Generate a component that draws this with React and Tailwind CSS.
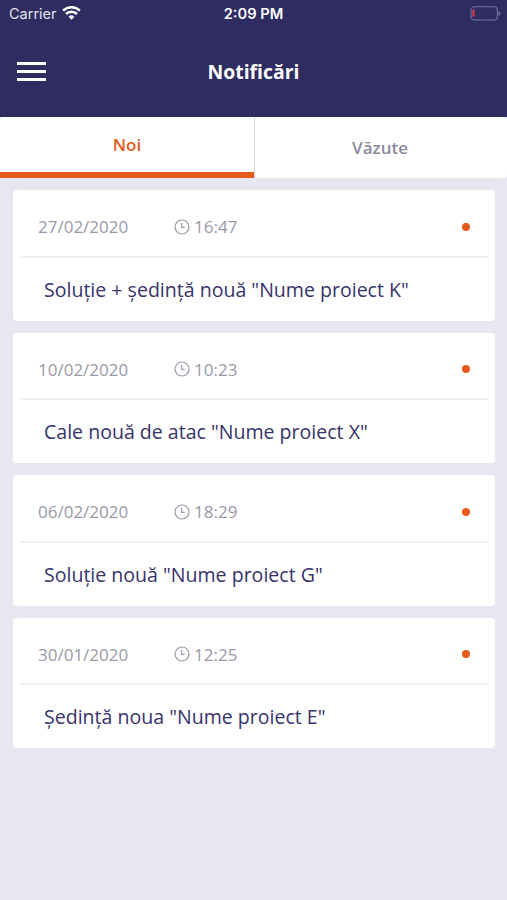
const notifications = [
  { date: "27/02/2020", time: "16:47", title: 'Soluție + ședință nouă "Nume proiect K"' },
  { date: "10/02/2020", time: "10:23", title: 'Cale nouă de atac "Nume proiect X"' },
  { date: "06/02/2020", time: "18:29", title: 'Soluție nouă "Nume proiect G"' },
  { date: "30/01/2020", time: "12:25", title: 'Ședință noua "Nume proiect E"' },
];

function WifiIcon() {
  return (
    <svg className="mb-[2px]" width="19" height="14" viewBox="0 0 19 14" fill="none" stroke="white" strokeWidth="2.5">
      <path d="M1.1 4.7a12 12 0 0 1 16.8 0" />
      <path d="M4 8a7.8 7.8 0 0 1 11 0" />
      <path d="M6.6 10.7a4.2 4.2 0 0 1 5.8 0L9.5 13.7z" fill="white" stroke="none" />
    </svg>
  );
}

function BatteryIcon() {
  return (
    <svg className="mb-[2px]" width="31" height="15" viewBox="0 0 31 15" fill="none">
      <rect x="1" y="0.8" width="26.4" height="13.2" rx="3.4" stroke="#77759f" strokeWidth="1.1" />
      <rect x="2.3" y="3.2" width="2.4" height="7.6" rx="1" fill="#c23a45" />
      <path d="M28.6 5c1.2.4 1.8 1.3 1.8 2.4s-.6 2-1.8 2.4z" fill="#77759f" />
    </svg>
  );
}

function ClockIcon() {
  return (
    <svg width="16" height="16" viewBox="0 0 16 16" fill="none" stroke="#9a99a8" strokeWidth="1.2">
      <circle cx="8" cy="8" r="7" />
      <path d="M7.7 4v4.3h3" />
    </svg>
  );
}

function StatusBar() {
  return (
    <div className="grid h-7 grid-cols-3 items-center pl-[9px] pr-[6px] font-['Inter','Liberation_Sans',sans-serif] leading-none">
      <div className="flex items-center gap-[5px]">
        <span className="text-[14.5px] text-[#e4e3f0]">Carrier</span>
        <WifiIcon />
      </div>
      <span className="-ml-[3px] text-center text-[14.7px] font-semibold">2:09 PM</span>
      <div className="flex justify-end">
        <BatteryIcon />
      </div>
    </div>
  );
}

function NotificationCard({ date, time, title }) {
  return (
    <article className="h-[130.5px] rounded-[4px] bg-white px-[7px]">
      <div className="flex h-[67.5px] items-center border-b-2 border-[#f0f0f3] pl-[18px] pr-[18px] pt-[8px] text-[17px] text-[#9a99a8]">
        <span className="w-[136px]">{date}</span>
        <ClockIcon />
        <span className="ml-1">{time}</span>
        <span className="ml-auto size-2 rounded-full bg-[#e65a1c]" />
      </div>
      <h2 className="flex h-[63.5px] items-center whitespace-nowrap pl-6 text-[19.56px] text-[#37336b]">{title}</h2>
    </article>
  );
}

export default function App() {
  return (
    <div className="min-h-[900px] w-full bg-[#e7e7f1] font-['Open_Sans',sans-serif]">
      <header className="h-[116.5px] bg-[#2e2c60] text-white">
        <StatusBar />
        <div className="grid h-[87px] grid-cols-3 items-center px-[17px]">
          <button className="flex w-[29px] flex-col gap-[5px]" aria-label="Meniu">
            <span className="h-[3px] bg-white" />
            <span className="h-[3px] bg-white" />
            <span className="h-[3px] bg-white" />
          </button>
          <h1 className="pt-px text-center text-[19.4px] font-bold">Notificări</h1>
        </div>
      </header>

      <nav className="flex h-[61.5px] text-[17px] font-semibold">
        <button className="w-[254px] rounded-tl-[4px] border-b-[6px] border-[#e65a1c] bg-white text-[#e65a1c]">Noi</button>
        <button className="flex-1 rounded-r-[4px] border-l border-[#d8d8e0] bg-white pr-[2px] text-[#8b8a9b]">Văzute</button>
      </nav>

      <main className="flex flex-col gap-3 pl-[13px] pr-[12.5px] pt-3">
        {notifications.map((n) => (
          <NotificationCard key={n.date} {...n} />
        ))}
      </main>
    </div>
  );
}
